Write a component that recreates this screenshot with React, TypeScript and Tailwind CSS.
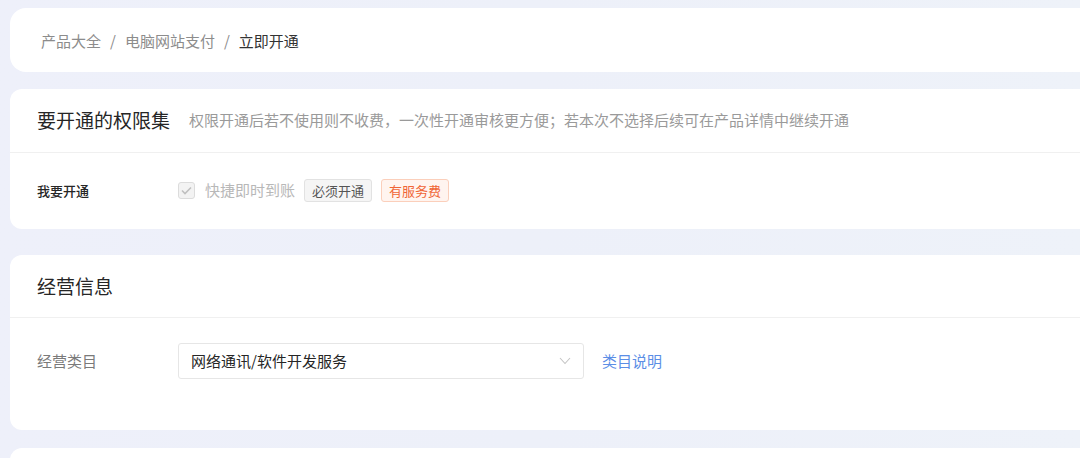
import React from "react";

const font = { fontFamily: '"Noto Sans CJK SC", "Noto Sans", sans-serif' };

export default function App() {
  return (
    <div
      className="w-[1080px] h-[458px] overflow-hidden bg-gradient-to-r from-[#eef0fa] via-[#edf0f9] to-[#eef2f9] pl-[10px] pt-[8px]"
      style={font}
    >
      <div className="flex w-[1100px] flex-col">
        {/* Breadcrumb card */}
        <div className="flex h-[64px] items-center rounded-[16px] bg-white pl-[31px] text-[15px] leading-none">
          <span className="text-[#8c8c8c]">产品大全</span>
          <span className="mx-[9px] text-[#8c8c8c]">/</span>
          <span className="text-[#8c8c8c]">电脑网站支付</span>
          <span className="mx-[9px] text-[#8c8c8c]">/</span>
          <span className="text-[#333333]">立即开通</span>
        </div>

        {/* Permission card */}
        <div className="mt-[17px] h-[140px] rounded-[12px] bg-white">
          <div className="flex h-[64px] items-center border-b border-[#f0f0f0] pl-[27px]">
            <span className="text-[19px] text-[#262626]">要开通的权限集</span>
            <span className="ml-[19px] text-[15px] text-[#9a9a9a]">
              权限开通后若不使用则不收费，一次性开通审核更方便；若本次不选择后续可在产品详情中继续开通
            </span>
          </div>
          <div className="flex items-center pl-[27px] pt-[26px]">
            <span className="w-[141px] text-[13px] font-medium text-[#262626]">我要开通</span>
            <span className="flex h-[17px] w-[17px] items-center justify-center rounded-[3px] border border-[#dcdcdc] bg-[#f3f3f3]">
              <svg width="11" height="9" viewBox="0 0 11 9" fill="none">
                <path d="M1 4.5 L4 7.5 L10 1.5" stroke="#c0c0c0" strokeWidth="1.6" />
              </svg>
            </span>
            <span className="ml-[10px] text-[15px] text-[#b8b8b8]">快捷即时到账</span>
            <span className="ml-[9px] flex h-[23px] items-center rounded-[3px] border border-[#e2e2e2] bg-[#f5f5f5] px-[7px] text-[13px] text-[#555555]">
              必须开通
            </span>
            <span className="ml-[9px] flex h-[23px] items-center rounded-[3px] border border-[#fbcfbb] bg-[#fff4ef] px-[7px] text-[13px] text-[#f06535]">
              有服务费
            </span>
          </div>
        </div>

        {/* Business info card */}
        <div className="mt-[26px] h-[175px] rounded-[12px] bg-white">
          <div className="flex h-[63px] items-center border-b border-[#f0f0f0] pl-[27px]">
            <span className="text-[19px] text-[#262626]">经营信息</span>
          </div>
          <div className="flex items-center pl-[27px] pt-[25px]">
            <span className="w-[141px] text-[15px] text-[#7a7a7a]">经营类目</span>
            <div className="flex h-[36px] w-[406px] items-center justify-between rounded-[3px] border border-[#e6e6e6] pl-[12px] pr-[12px]">
              <span className="text-[15px] text-[#262626]">网络通讯/软件开发服务</span>
              <svg width="12" height="8" viewBox="0 0 12 8" fill="none">
                <path d="M1 1 L6 6.5 L11 1" stroke="#c4c4c4" strokeWidth="1.1" />
              </svg>
            </div>
            <span className="ml-[18px] text-[15px] text-[#5b8ee6]">类目说明</span>
          </div>
        </div>

        {/* Next card */}
        <div className="mt-[18px] h-[60px] rounded-[12px] bg-white" />
      </div>
    </div>
  );
}
